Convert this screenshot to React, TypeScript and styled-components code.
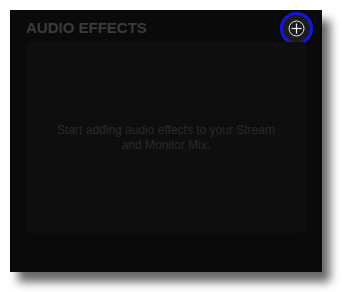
import React from "react";
import styled, { createGlobalStyle } from "styled-components";

const Global = createGlobalStyle`
  html, body { margin: 0; padding: 0; background: #ffffff; }
  body { font-family: "Liberation Sans", Arial, sans-serif; }
`;

const Page = styled.div`
  padding: 10px;
  width: 342px;
  height: 292px;
  box-sizing: border-box;
`;

const Panel = styled.section`
  width: 312px;
  height: 262px;
  background: #0a0a0a;
  box-shadow: 8px 10px 9px rgba(0, 0, 0, 0.6);
  display: flex;
  flex-direction: column;
`;

const Header = styled.header`
  display: flex;
  align-items: center;
  justify-content: space-between;
  height: 30px;
  padding: 2px 9px 0 16px;
`;

const Title = styled.h2`
  margin: 0;
  font-size: 15px;
  line-height: 17px;
  font-weight: 700;
  color: #3b3b3b;
  letter-spacing: 0;
`;

const AddButton = styled.button`
  width: 33px;
  height: 33px;
  margin-top: 3px;
  padding: 0;
  border-radius: 50%;
  border: 3px solid #1414e6;
  background: #1c1c1c;
  display: flex;
  align-items: center;
  justify-content: center;
  box-sizing: border-box;
  cursor: pointer;
`;

const Content = styled.div`
  margin: 0 16px;
  height: 191px;
  border-radius: 4px;
  background: #0e0e0e;
  display: flex;
  align-items: center;
  justify-content: center;
`;

const Message = styled.p`
  margin: 0;
  max-width: 232px;
  text-align: center;
  font-size: 12px;
  line-height: 15px;
  color: #2a2a2a;
`;

export default function App() {
  return (
    <>
      <Global />
      <Page>
        <Panel>
          <Header>
            <Title>AUDIO EFFECTS</Title>
            <AddButton aria-label="Add audio effect">
              <svg width="17" height="17" viewBox="0 0 17 17">
                <circle cx="8.5" cy="8.5" r="7.5" fill="none" stroke="#e8e8e8" strokeWidth="1" />
                <line x1="8.5" y1="3.5" x2="8.5" y2="13.5" stroke="#f4f4f4" strokeWidth="1.2" />
                <line x1="3.5" y1="8.5" x2="13.5" y2="8.5" stroke="#f4f4f4" strokeWidth="1.2" />
              </svg>
            </AddButton>
          </Header>
          <Content>
            <Message>Start adding audio effects to your Stream and Monitor Mix.</Message>
          </Content>
        </Panel>
      </Page>
    </>
  );
}
